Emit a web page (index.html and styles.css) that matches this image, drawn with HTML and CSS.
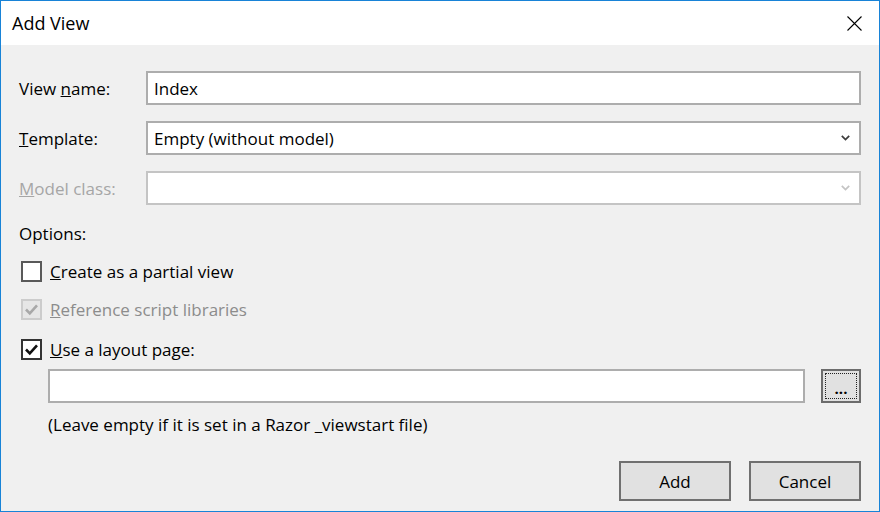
FILE: index.html
```html
<!DOCTYPE html>
<html>
<head>
<meta charset="utf-8">
<link rel="stylesheet" href="styles.css">
</head>
<body>
<div class="window">
  <div class="titlebar">
    <span class="title">Add View</span>
    <svg class="close" width="15" height="15" viewBox="0 0 15 15"><path d="M0.5 0.5 L14.5 14.5 M14.5 0.5 L0.5 14.5" stroke="#000" stroke-width="1.1" fill="none"/></svg>
  </div>
  <div class="content">
    <div class="grid">
      <label class="lbl">View <u>n</u>ame:</label>
      <div class="field"><span class="value">Index</span></div>
      <label class="lbl"><u>T</u>emplate:</label>
      <div class="field select"><span class="value">Empty (without model)</span>
        <svg class="chev" width="9" height="6" viewBox="0 0 9 6"><path d="M0.8 0.8 L4.5 4.6 L8.2 0.8" stroke="#3c3c3c" stroke-width="1.7" fill="none"/></svg>
      </div>
      <label class="lbl disabled"><u>M</u>odel class:</label>
      <div class="field select off">
        <svg class="chev" width="9" height="6" viewBox="0 0 9 6"><path d="M0.8 0.8 L4.5 4.6 L8.2 0.8" stroke="#c4c4c4" stroke-width="1.7" fill="none"/></svg>
      </div>
    </div>
    <div class="options">Options:</div>
    <div class="check c1"><span class="box"></span><span><u>C</u>reate as a partial view</span></div>
    <div class="check c2 dis"><span class="box"><svg width="17" height="17" viewBox="0 0 17 17"><path d="M3 8.5 L6.8 12.3 L14 4.3" stroke="#a8a8a8" stroke-width="2.6" fill="none"/></svg></span><span><u>R</u>eference script libraries</span></div>
    <div class="check c3"><span class="box"><svg width="17" height="17" viewBox="0 0 17 17"><path d="M3 8.5 L6.8 12.3 L14 4.3" stroke="#111" stroke-width="2.6" fill="none"/></svg></span><span><u>U</u>se a layout page:</span></div>
    <div class="layout-row">
      <div class="field grow"></div>
      <button class="browse"><span class="dots">...</span></button>
    </div>
    <div class="hint">(Leave empty if it is set in a Razor _viewstart file)</div>
    <div class="buttons">
      <button class="btn">Add</button>
      <button class="btn">Cancel</button>
    </div>
  </div>
</div>
</body>
</html>
```
FILE: styles.css
```css
* { box-sizing: border-box; }
html, body { margin: 0; padding: 0; }
body {
  font-family: "Open Sans", "Noto Sans", sans-serif;
  font-size: 17px;
  color: #000;
  background: #f0f0f0;
}
.window {
  width: 880px;
  height: 512px;
  border: 1px solid #1883d7;
  background: #f0f0f0;
  display: flex;
  flex-direction: column;
}
.titlebar {
  height: 44px;
  background: #fff;
  display: flex;
  align-items: center;
  justify-content: space-between;
  padding: 0 17px 0 11px;
}
.title { font-size: 18px; }
.content {
  padding: 26px 18px 0 18px;
  display: flex;
  flex-direction: column;
}
.grid {
  display: grid;
  grid-template-columns: 127px 1fr;
  grid-auto-rows: 34px;
  row-gap: 16px;
  align-items: center;
}
.lbl { line-height: 23px; }
.lbl.disabled { color: #a6a6a6; }
.field {
  height: 34px;
  border: 2px solid #adadad;
  background: #fff;
  display: flex;
  align-items: center;
  padding-left: 6px;
  position: relative;
}
.field.off { border-color: #c4c4c4; }
.value { line-height: 23px; }
.chev { position: absolute; right: 9px; top: 12px; }
.options { margin-top: 17px; line-height: 23px; }
.check {
  display: flex;
  align-items: center;
  height: 21px;
  gap: 8px;
  margin-left: 2px;
}
.c1 { margin-top: 16px; }
.c2 { margin-top: 17px; color: #8c8c8c; }
.c3 { margin-top: 19px; }
.box {
  width: 21px;
  height: 21px;
  border: 2px solid #333;
  background: #fff;
  display: flex;
  align-items: center;
  justify-content: center;
}
.c1 .box { border-color: #595959; }
.dis .box { border-color: #cccccc; background: #e6e6e6; }
.layout-row {
  display: flex;
  margin: 9px 0 0 29px;
  gap: 16px;
}
.grow { flex: 1; }
.browse {
  width: 40px;
  height: 34px;
  border: 2px solid #6c6c6c;
  background: #e1e1e1;
  padding: 2px;
  font: inherit;
}
.dots {
  display: flex;
  align-items: flex-end;
  justify-content: center;
  width: 100%;
  height: 100%;
  border: 1px dotted #222;
  font-size: 15px;
  font-weight: 700;
  line-height: 14px;
  padding-bottom: 3px;
}
.hint { margin: 10px 0 0 29px; line-height: 23px; }
.buttons {
  display: flex;
  justify-content: flex-end;
  gap: 18px;
  margin-top: 25px;
}
.btn {
  width: 112px;
  height: 40px;
  border: 2px solid #707070;
  background: #e1e1e1;
  font: inherit;
  color: #000;
  padding: 0;
}
```
